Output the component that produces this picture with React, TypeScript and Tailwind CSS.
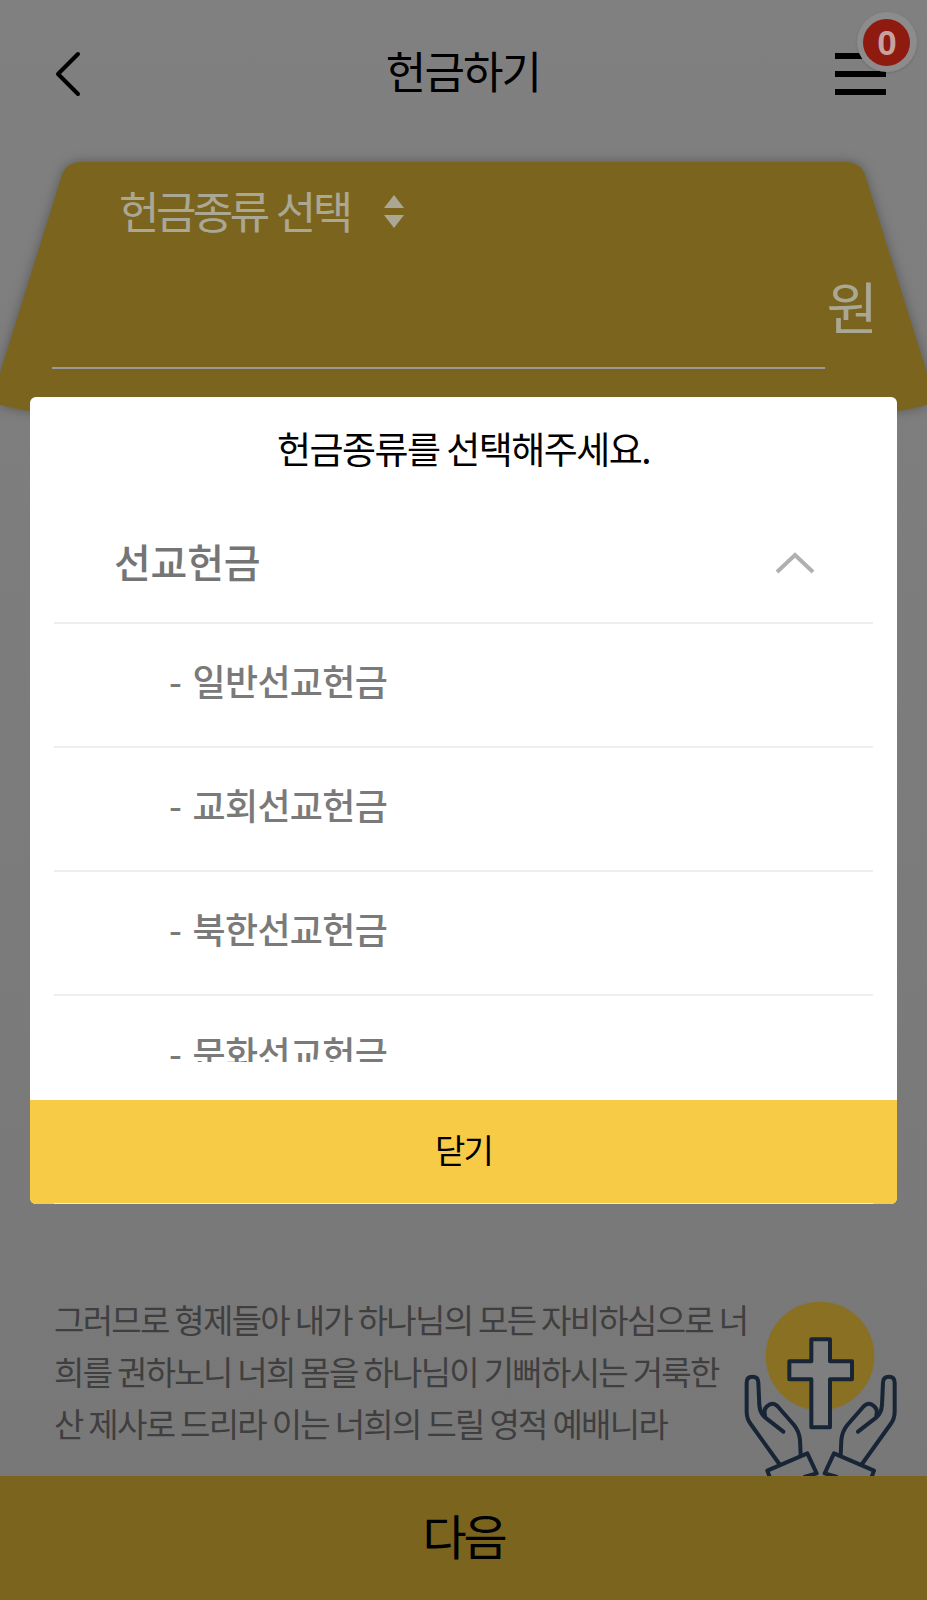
const font = { fontFamily: '"Noto Sans CJK KR", "Noto Sans", sans-serif' };

function HandsIcon() {
  const hand = (
    <g>
      <path d="M178 552 L92 432 Q80 416 80 395 L80 308 Q80 290 97 290 Q115 290 115 308 L118 375 Q120 400 135 412 L190 455" />
      <path d="M135 405 Q128 385 150 373 Q162 368 172 378 L222 435 Q238 455 240 480 L242 525" />
      <path d="M142 572 L262 520 L290 580 L255 590 M142 572 L148 588" />
    </g>
  );
  return (
    <svg viewBox="0 0 621 600" className="w-[207px] h-[200px] shrink-0">
      <circle cx="300" cy="228" r="163" fill="#8a7022" />
      <path
        d="M274 178 H330 V244 H396 V298 H330 V442 H274 V298 H208 V244 H274 Z"
        fill="#7f7f7f"
        stroke="#172536"
        strokeWidth="12"
        strokeLinejoin="round"
      />
      <g fill="none" stroke="#172536" strokeWidth="12" strokeLinecap="round" strokeLinejoin="round">
        {hand}
        <g transform="translate(604 0) scale(-1 1)">{hand}</g>
      </g>
    </svg>
  );
}

const rows = ["- 일반선교헌금", "- 교회선교헌금", "- 북한선교헌금", "- 문화선교헌금"];

export default function App() {
  return (
    <div
      style={font}
      className="relative w-[927px] h-[1600px] overflow-hidden flex flex-col bg-gradient-to-b from-[#808080] to-[#777777]"
    >
      {/* header */}
      <header className="h-[146px] shrink-0 relative flex items-center justify-between pl-[54px] pr-[41px] pt-[2px]">
        <div className="w-[37px]">
          <svg viewBox="0 0 28 46" className="w-[28px] h-[46px]" fill="none" stroke="#000" strokeWidth="4" strokeLinecap="round" strokeLinejoin="round">
            <path d="M24 3 L4 23 L24 43" />
          </svg>
        </div>
        <h1 className="text-[44px] leading-none font-normal tracking-[-1.9px] text-black -translate-y-[4px]">헌금하기</h1>
        <div className="relative w-[51px] flex flex-col gap-[12px]">
          <div className="h-[6px] bg-black" />
          <div className="h-[6px] bg-black" />
          <div className="h-[6px] bg-black" />
          <div className="absolute -right-[31px] -top-[41px] w-[60px] h-[60px] rounded-full bg-[#8c8c8c] shadow-[0_1px_3px_rgba(0,0,0,0.15)] flex items-center justify-center">
            <div className="w-[47px] h-[47px] rounded-full bg-[#8f1a10] flex items-center justify-center">
              <span className="text-[35px] leading-none font-bold text-[#c7a3a0]" style={{ fontFamily: '"Liberation Sans", sans-serif' }}>0</span>
            </div>
          </div>
        </div>
      </header>

      {/* gold card */}
      <section className="relative h-[254px] shrink-0 px-[52px]">
        <svg viewBox="0 0 927 254" className="absolute left-0 top-0 w-[927px] h-[254px] overflow-visible" style={{ filter: "drop-shadow(0 0 6px rgba(0,0,0,0.3))" }}>
          <path
            d="M0 227 L61 32 Q65 16 82 16 L845 16 Q862 16 866 32 L927 227 L927 259 Q912 263 897 265 L30 265 Q15 263 0 259 Z"
            fill="#7b651e"
          />
        </svg>
        <div className="relative pt-[38px]">
          <div className="flex items-center gap-[34px] pl-[67px] h-[52px]">
            <span className="text-[44px] leading-none tracking-[-3.6px] [word-spacing:3px] font-normal text-[#aaa795]">헌금종류 선택</span>
            <svg viewBox="0 0 20 33" className="w-[20px] h-[33px] translate-y-[1px]" fill="#aaa795">
              <path d="M10 0 L20 13 H0 Z M0 20 H20 L10 33 Z" />
            </svg>
          </div>
          <div className="flex justify-end items-start h-[124px] pt-[41px] pr-[0px]">
            <span className="text-[56px] leading-none font-normal text-[#aaa795] translate-x-[3px]">원</span>
          </div>
          <div className="h-[2px] w-[773px] bg-[#9a9a9a] mt-[7px]" />
        </div>
      </section>

      {/* verse, clipped by the footer */}
      <main className="flex-1 min-h-0 overflow-hidden relative flex items-start pl-[54px] pr-[20px] pt-[893px]">
        <p className="text-[33px] leading-[52px] tracking-[-1.7px] font-normal text-[#3f3f3f] w-[700px] shrink-0">
          그러므로 형제들아 내가 하나님의 모든 자비하심으로 너
          <br />
          희를 권하노니 너희 몸을 하나님이 기뻐하시는 거룩한
          <br />
          산 제사로 드리라 이는 너희의 드릴 영적 예배니라
        </p>
        <div className="-mt-[13px] -ml-[34px]">
          <HandsIcon />
        </div>
      </main>

      {/* footer */}
      <footer className="h-[124px] shrink-0 bg-[#7a641e] flex items-center justify-center pb-[8px]">
        <span className="text-[48px] leading-none tracking-[-3.2px] text-black">다음</span>
      </footer>

      {/* modal */}
      <div className="absolute left-[30px] top-[397px] w-[867px] h-[807px] bg-white rounded-[6px] overflow-hidden flex flex-col">
        <h2 className="h-[102px] shrink-0 flex items-center justify-center text-[37px] leading-none font-normal tracking-[-1.55px] text-black">
          헌금종류를 선택해주세요.
        </h2>
        <div className="h-[563px] shrink-0 overflow-hidden px-[24px]">
          <div className="h-[125px] border-b-2 border-[#eeeeee] flex items-center justify-between pl-[60px] pr-[58px]">
            <span className="text-[40px] leading-none tracking-[-0.2px] font-medium text-[#757575]">선교헌금</span>
            <svg viewBox="0 0 40 22" className="w-[40px] h-[22px] translate-y-[2px]" fill="none" stroke="#b0b0b0" strokeWidth="4">
              <path d="M2 20 L20 3 L38 20" />
            </svg>
          </div>
          {rows.map((r) => (
            <div key={r} className="h-[124px] border-b-2 border-[#eeeeee] flex items-center pl-[115px] pb-[11px]">
              <span className="text-[36px] leading-none tracking-[-0.7px] [word-spacing:4px] font-medium text-[#7a7a7a]">{r}</span>
            </div>
          ))}
        </div>
        <div className="h-[38px] shrink-0" />
        <button className="relative flex-1 bg-[#f7cb45] flex items-center justify-center pb-[5px] text-[33px] leading-none tracking-[-1.8px] text-black">
          닫기
          <span className="absolute left-[24px] right-[24px] bottom-0 h-[1px] bg-[#f3efdc]" />
        </button>
      </div>
    </div>
  );
}
